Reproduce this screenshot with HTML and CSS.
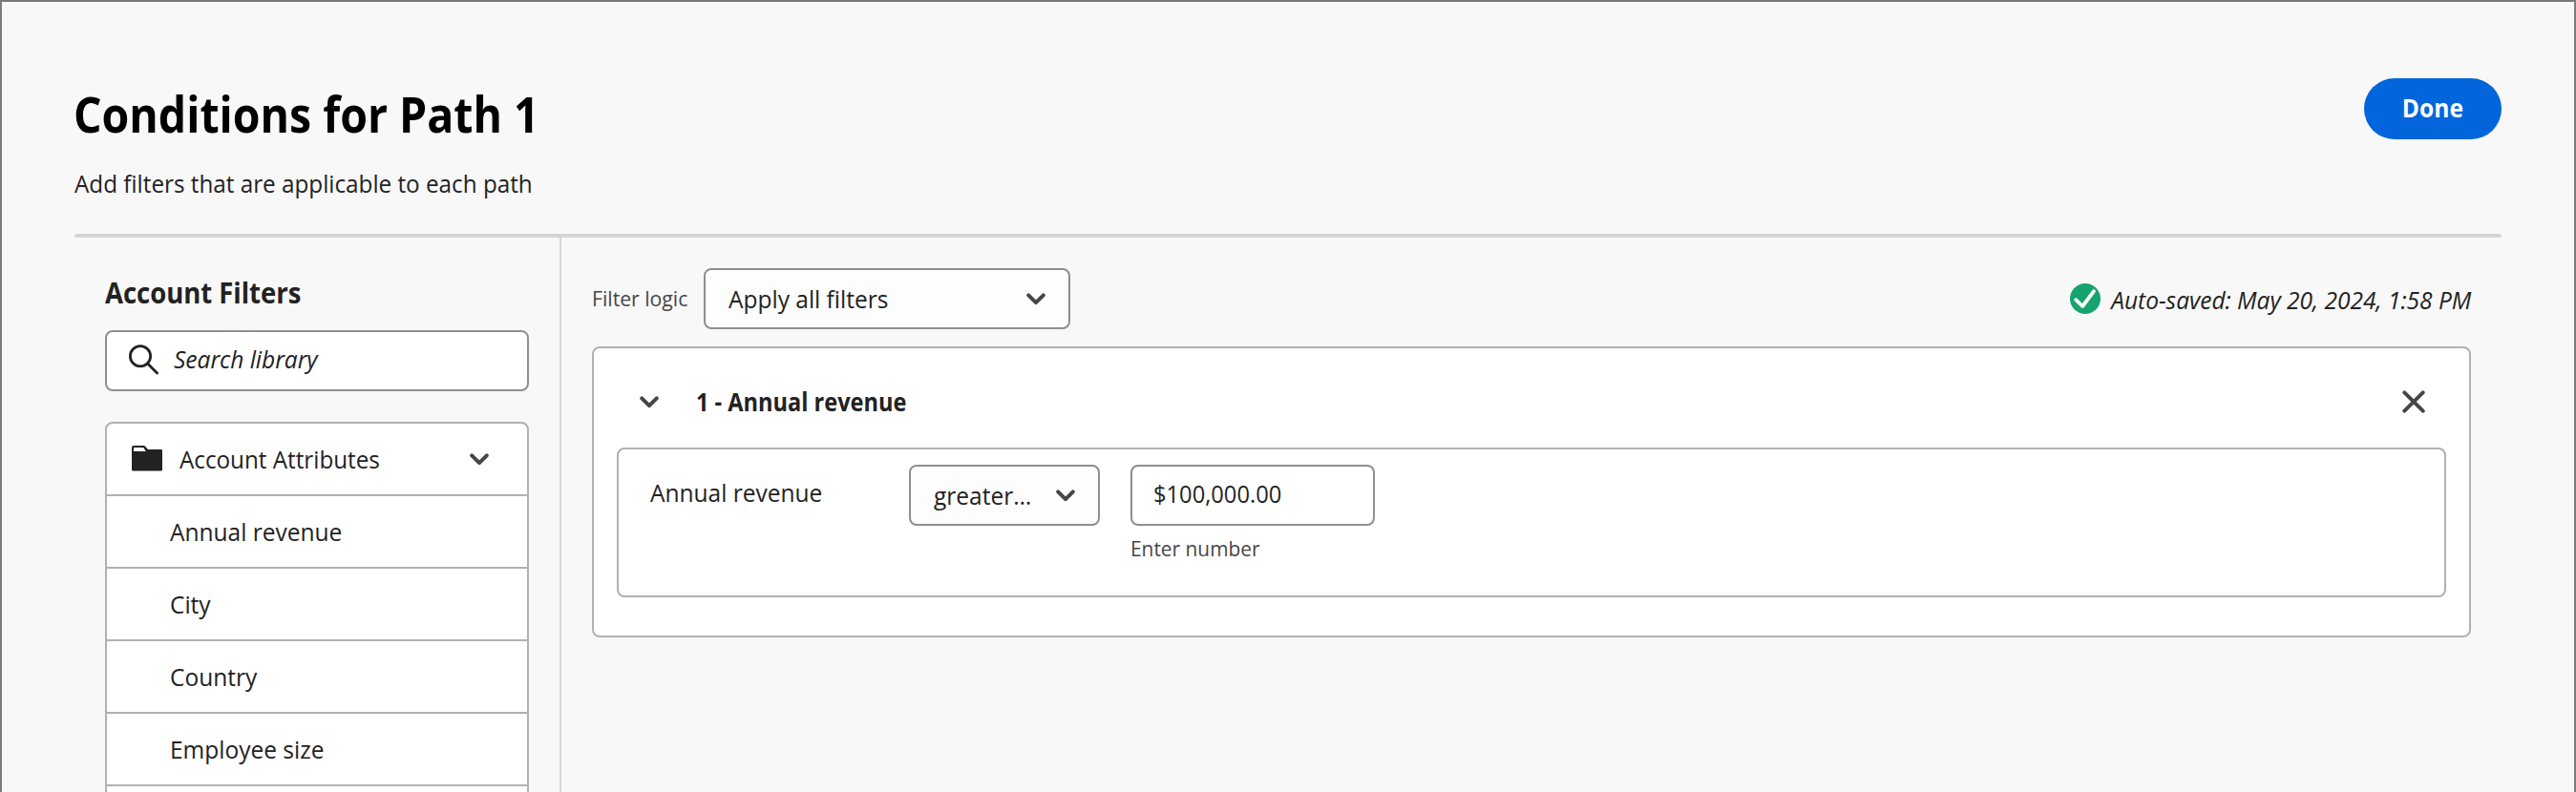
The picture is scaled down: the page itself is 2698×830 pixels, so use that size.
FILE: index.html
```html
<!DOCTYPE html>
<html lang="en">
<head>
<meta charset="utf-8">
<title>Conditions for Path 1</title>
<link rel="stylesheet" href="styles.css">
</head>
<body>
<div class="page">
  <header class="header">
    <div class="heading">
      <h1 class="title"><span class="t">Conditions for Path 1</span></h1>
      <p class="subtitle"><span class="t">Add filters that are applicable to each path</span></p>
    </div>
    <button class="done"><span class="t">Done</span></button>
  </header>
  <div class="rule"></div>
  <div class="body">
    <aside class="sidebar">
      <h2 class="sidebar-title"><span class="t">Account Filters</span></h2>
      <div class="search">
        <svg class="search-icon" width="32" height="32" viewBox="0 0 32 32"><circle cx="12" cy="12.2" r="10.6" fill="none" stroke="#222" stroke-width="2.8"/><path d="M19.8 20.2 29.6 30" stroke="#222" stroke-width="2.8" stroke-linecap="round"/></svg>
        <span class="t search-text">Search library</span>
      </div>
      <div class="tree">
        <div class="tree-head">
          <svg class="folder" width="32" height="27" viewBox="0 0 32 27"><path fill="#222" fill-rule="evenodd" d="M2 0h10.600a2 2 0 0 1 1.500.7L17 4h14a1 1 0 0 1 1 1v20a1.500 1.500 0 0 1-1.500 1.500h-29A1.500 1.500 0 0 1 0 25V2a2 2 0 0 1 2-2Zm0 2v4h12.800l-2.600-4Z"/></svg>
          <span class="t tree-name">Account Attributes</span>
          <svg class="chev" width="20" height="13" viewBox="0 0 20 13"><path d="M2.200 2.300 10 10.200l7.800-7.900" fill="none" stroke="#464646" stroke-width="4" stroke-linecap="round" stroke-linejoin="round"/></svg>
        </div>
        <div class="tree-item"><span class="t">Annual revenue</span></div>
        <div class="tree-item"><span class="t">City</span></div>
        <div class="tree-item"><span class="t">Country</span></div>
        <div class="tree-item"><span class="t">Employee size</span></div>
        <div class="tree-item"></div>
      </div>
    </aside>
    <main class="main">
      <div class="toolbar">
        <span class="t logic-label">Filter logic</span>
        <div class="select logic-select">
          <span class="t">Apply all filters</span>
          <svg class="chev" width="20" height="13" viewBox="0 0 20 13"><path d="M2.200 2.300 10 10.200l7.800-7.900" fill="none" stroke="#464646" stroke-width="4" stroke-linecap="round" stroke-linejoin="round"/></svg>
        </div>
        <div class="saved">
          <svg width="32" height="32" viewBox="0 0 32 32"><circle cx="16" cy="16" r="16" fill="#15a46e"/><path d="M6.200 17.200 13.200 24 25 8.200" fill="none" stroke="#fff" stroke-width="3.800" stroke-linecap="round" stroke-linejoin="round"/></svg>
          <span class="t saved-text">Auto-saved: May 20, 2024, 1:58 PM</span>
        </div>
      </div>
      <section class="panel">
        <div class="panel-head">
          <svg class="chev" width="20" height="13" viewBox="0 0 20 13"><path d="M2.200 2.300 10 10.200l7.800-7.900" fill="none" stroke="#464646" stroke-width="4" stroke-linecap="round" stroke-linejoin="round"/></svg>
          <h3 class="panel-title"><span class="t">1 - Annual revenue</span></h3>
          <svg class="close" width="24" height="24" viewBox="0 0 24 24"><path d="M2.300 2.300 21.700 21.700M21.700 2.300 2.300 21.700" stroke="#464646" stroke-width="4" stroke-linecap="round"/></svg>
        </div>
        <div class="condition">
          <div class="condition-label"><span class="t">Annual revenue</span></div>
          <div class="select op-select">
            <span class="t">greater…</span>
            <svg class="chev" width="20" height="13" viewBox="0 0 20 13"><path d="M2.200 2.300 10 10.200l7.800-7.900" fill="none" stroke="#464646" stroke-width="4" stroke-linecap="round" stroke-linejoin="round"/></svg>
          </div>
          <div class="field">
            <div class="input"><span class="t">$100,000.00</span></div>
            <div class="help"><span class="t">Enter number</span></div>
          </div>
        </div>
      </section>
    </main>
  </div>
</div>
</body>
</html>
```
FILE: styles.css
```css
* { box-sizing: border-box; }
html, body { margin: 0; height: 830px; overflow: hidden; }
body {
  font-family: "Open Sans", "Noto Sans", sans-serif;
  font-size: 26px;
  line-height: 36px;
  color: #222;
  background: #f8f8f8;
}
h1, h2, h3, p { margin: 0; }
svg { display: block; flex: none; }

/* Slightly narrowed type */
.t {
  --narrow: 0.942;
  display: inline-block;
  white-space: nowrap;
  transform: scaleX(var(--narrow));
  transform-origin: 0 50%;
}

.page {
  height: 830px;
  overflow: hidden;
  border: solid #7b7b7b;
  border-width: 2px 2px 0;
  padding: 80px 76px 0;
}
.header { display: flex; justify-content: space-between; align-items: flex-start; height: 163px; }
.heading { padding-top: 7px; }
.title { margin-left: -1px; font-size: 52px; line-height: 60px; font-weight: 700; color: #000; }
.title .t { --narrow: 0.893; }
.subtitle { margin-top: 25px; }
.subtitle .t { --narrow: 0.933; }
.done {
  width: 144px;
  height: 64px;
  padding: 0 0 3px;
  border: 0;
  border-radius: 32px;
  background: #0265dc;
  color: #fff;
  font: inherit;
  font-weight: 700;
}
.done .t { --narrow: 0.945; transform-origin: 50% 50%; }
.rule { height: 4px; border-radius: 2px; background: #d5d5d5; }

.body { display: flex; height: 600px; }
.sidebar { width: 510px; padding: 38px 32px 0; border-right: 2px solid #d5d5d5; }
.sidebar-title { font-size: 30px; line-height: 40px; font-weight: 700; }
.sidebar-title .t { --narrow: 0.915; }
.search {
  display: flex;
  align-items: center;
  gap: 15px;
  height: 64px;
  margin-top: 19px;
  padding: 0 23px;
  border: 2px solid #8f8f8f;
  border-radius: 8px;
  background: #fff;
}
.search-icon { margin-bottom: 2px; }
.search-text { font-style: italic; padding-bottom: 4px; }
.tree {
  margin-top: 32px;
  border: 2px solid #b1b1b1;
  border-radius: 8px 8px 0 0;
  background: #fff;
}
.tree-head { display: flex; align-items: center; height: 74px; padding: 0 40px 0 26px; }
.folder { margin-bottom: 1px; }
.tree-name { --narrow: 0.932; margin: 0 auto 0 18px; }
.tree-item { height: 76px; padding: 19px 0 0 66px; border-top: 2px solid #b1b1b1; }

.main { flex: 1; padding: 32px 32px 0; }
.toolbar { display: flex; align-items: center; height: 64px; }
.logic-label { width: 117px; font-size: 22.5px; color: #464646; }
.select {
  display: flex;
  align-items: center;
  justify-content: space-between;
  height: 64px;
  padding: 0 24px;
  border: 2px solid #8f8f8f;
  border-radius: 8px;
  background: #fdfdfd;
}
.logic-select { width: 384px; }
.saved { display: flex; align-items: center; margin-left: auto; }
.saved-text { --narrow: 0.942; transform-origin: 100% 50%; margin-left: -12px; padding-top: 2px; font-style: italic; }
.panel {
  height: 305px;
  margin-top: 18px;
  padding: 0 24px;
  border: 2px solid #b1b1b1;
  border-radius: 8px;
  background: #fff;
}
.panel-head { display: flex; align-items: center; height: 104px; padding: 8px 22px 0 24px; }
.panel-title { flex: 1; margin-left: 39px; font-size: 26px; font-weight: 700; }
.panel-title .t { --narrow: 0.906; }
.condition {
  display: flex;
  height: 157px;
  padding: 16px 0 0 33px;
  border: 2px solid #b1b1b1;
  border-radius: 8px;
}
.condition-label { width: 271px; padding-top: 11px; }
.op-select { width: 200px; }
.field { width: 256px; margin-left: 32px; }
.input {
  height: 64px;
  padding: 10px 22px 0;
  border: 2px solid #8f8f8f;
  border-radius: 8px;
  background: #fff;
}
.input .t { --narrow: 0.911; }
.help { margin-top: 9px; font-size: 22.5px; line-height: 30px; color: #464646; }
.help .t { --narrow: 0.928; }
```
